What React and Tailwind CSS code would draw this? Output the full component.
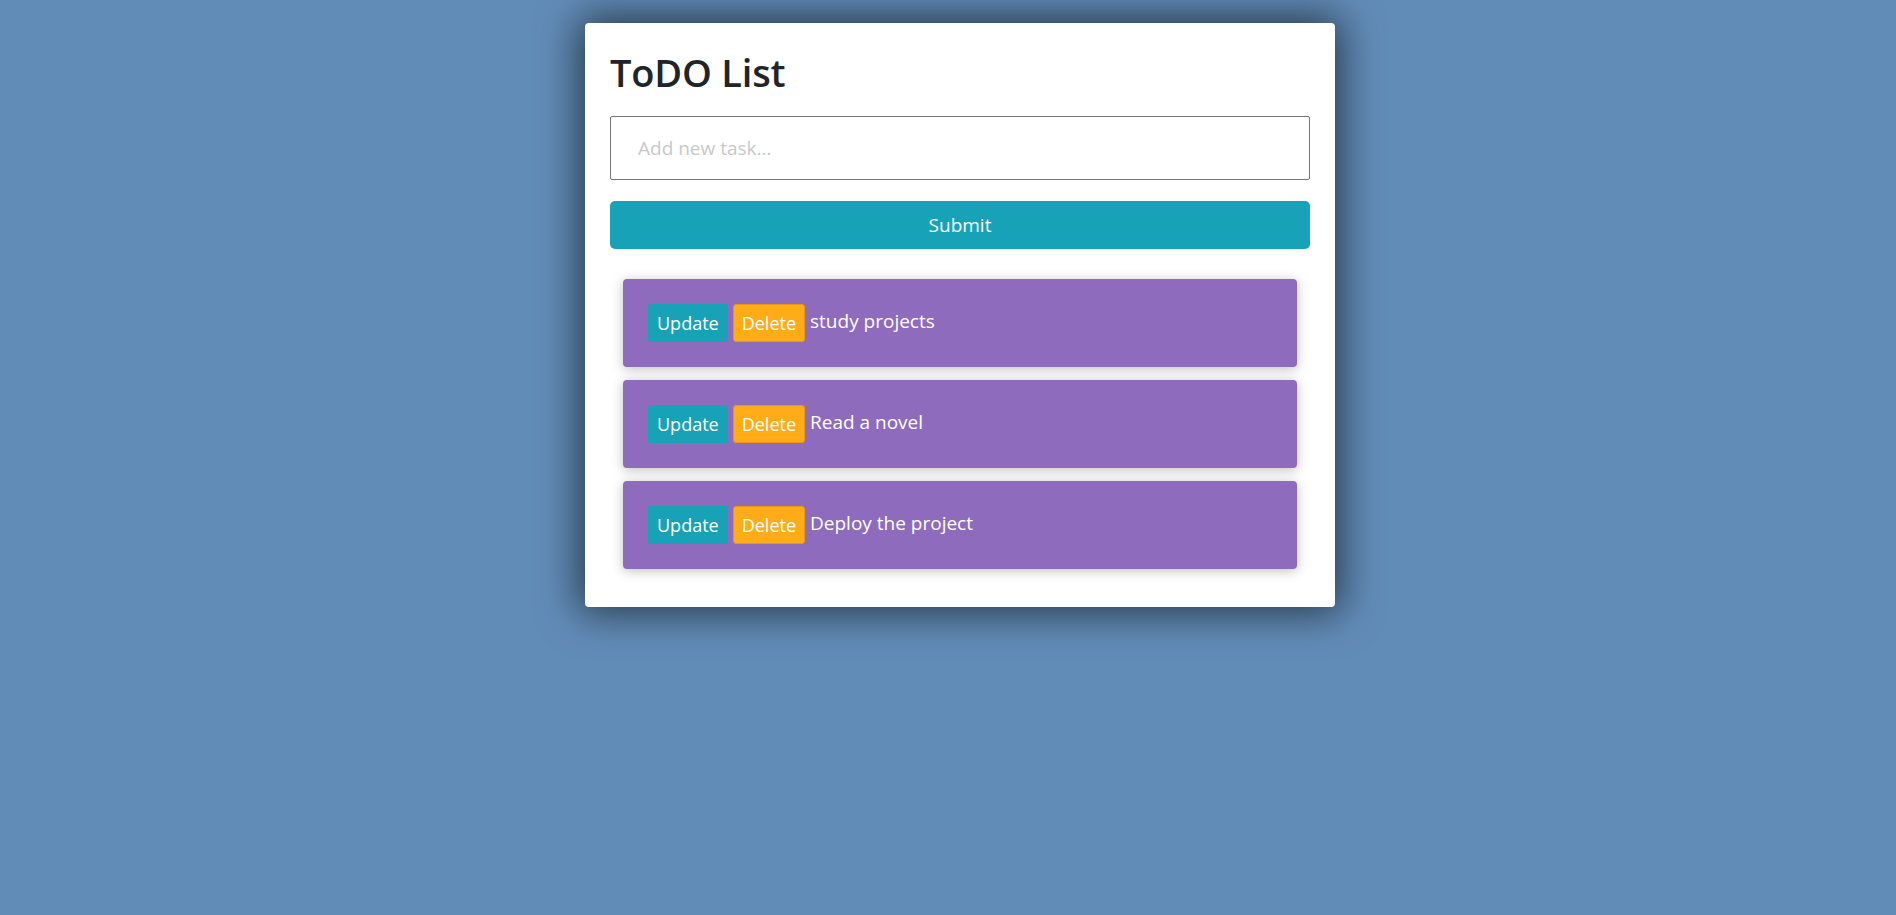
import React, { useState } from 'react';

const initialTodos = ['study projects', 'Read a novel', 'Deploy the project'];

const TodoItem = ({ text }) => (
  <div className="h-[88px] bg-[#8f6bbd] rounded-[4px] px-[25px] flex items-center gap-[5px] shadow-[0_2px_12px_rgba(0,0,0,0.25)]">
    <button className="h-[38px] px-[9px] bg-[#17a2b8] rounded-[3px] text-white text-[18px]">Update</button>
    <button className="h-[38px] px-[8px] bg-[#ffac18] border border-[#e8990e] rounded-[3px] text-white text-[18px]">Delete</button>
    <span className="text-white text-[19px] -mt-[4px]">{text}</span>
  </div>
);

const App = () => {
  const [task, setTask] = useState('');
  const [todos] = useState(initialTodos);

  return (
    <div className="min-h-screen bg-[#628cb8] pt-[23px] pl-[24px] flex justify-center items-start font-['Open_Sans',sans-serif]">
      <div className="w-[750px] bg-white rounded-[4px] p-[25px] shadow-[0_0_40px_6px_rgba(0,0,0,0.6)]">
        <h1 className="text-[38px] font-semibold leading-[48px] tracking-[-0.2px] text-[#212529]">ToDO List</h1>
        <input
          value={task}
          onChange={(e) => setTask(e.target.value)}
          placeholder="Add new task..."
          className="mt-[20px] block w-full h-[64px] border border-[#767676] rounded-[2px] px-[27px] text-[19px] outline-none placeholder:text-[#c8c8c8]"
        />
        <button className="mt-[21px] w-full h-[48px] bg-[#17a2b8] rounded-[5px] text-white text-[19px]">Submit</button>
        <div className="mt-[30px] px-[13px] pb-[13px] flex flex-col gap-[13px]">
          {todos.map((t) => (
            <TodoItem key={t} text={t} />
          ))}
        </div>
      </div>
    </div>
  );
};

export default App;
